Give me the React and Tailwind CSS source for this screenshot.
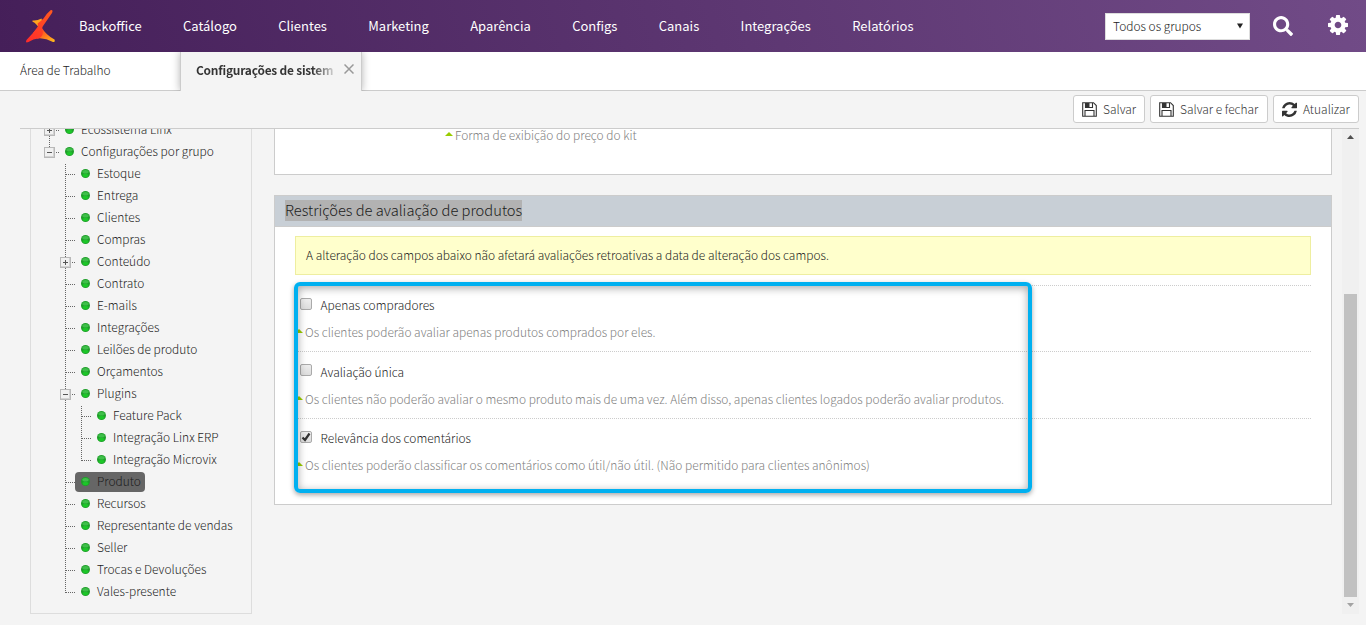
import { FaSearch } from "react-icons/fa";

const menu = ["Backoffice", "Catálogo", "Clientes", "Marketing", "Aparência", "Configs", "Canais", "Integrações", "Relatórios"];

const tree = [
    { label: "Ecossistema Linx", depth: 0, box: "plus" },
    { label: "Configurações por grupo", depth: 0, box: "minus", last: true },
    { label: "Estoque", depth: 1 },
    { label: "Entrega", depth: 1 },
    { label: "Clientes", depth: 1 },
    { label: "Compras", depth: 1 },
    { label: "Conteúdo", depth: 1, box: "plus" },
    { label: "Contrato", depth: 1 },
    { label: "E-mails", depth: 1 },
    { label: "Integrações", depth: 1 },
    { label: "Leilões de produto", depth: 1 },
    { label: "Orçamentos", depth: 1 },
    { label: "Plugins", depth: 1, box: "minus" },
    { label: "Feature Pack", depth: 2 },
    { label: "Integração Linx ERP", depth: 2 },
    { label: "Integração Microvix", depth: 2, last: true },
    { label: "Produto", depth: 1, selected: true },
    { label: "Recursos", depth: 1 },
    { label: "Representante de vendas", depth: 1 },
    { label: "Seller", depth: 1 },
    { label: "Trocas e Devoluções", depth: 1 },
    { label: "Vales-presente", depth: 1, last: true },
];

const options = [
    { label: "Apenas compradores", hint: "Os clientes poderão avaliar apenas produtos comprados por eles." },
    { label: "Avaliação única", hint: "Os clientes não poderão avaliar o mesmo produto mais de uma vez. Além disso, apenas clientes logados poderão avaliar produtos." },
    { label: "Relevância dos comentários", hint: "Os clientes poderão classificar os comentários como útil/não útil. (Não permitido para clientes anônimos)", checked: true },
];

function Logo() {
    return (
        <svg className="w-[30px] h-[34px]" viewBox="0 0 30 34">
            <defs>
                <linearGradient id="logoRed" x1="0" y1="1" x2="1" y2="0">
                    <stop offset="0" stopColor="#ff2a2a" />
                    <stop offset="1" stopColor="#ff5a1f" />
                </linearGradient>
                <linearGradient id="logoGold" x1="0.300" y1="0.200" x2="1" y2="1">
                    <stop offset="0" stopColor="#ff3a24" />
                    <stop offset="0.600" stopColor="#ff8a1e" />
                    <stop offset="1" stopColor="#ffc01c" />
                </linearGradient>
            </defs>
            <path d="M7.500 11.500Q12 12 16.500 9.500L18 15L14 19Q11 14 7.500 12.800Z" fill="#ffa51e" />
            <path d="M14 16Q18 16 17 19Q21 26 29.500 30.500Q30.500 33.500 28 33Q20 28.500 12 29.500L8 24Z" fill="url(#logoGold)" />
            <path d="M25.500 1.200Q28.500 0.500 27 4L18 17Q16.500 19 17.500 21Q19 27 14 29.300Q8 30 3.500 33Q0 34.500 1.500 31L12.500 19Q13.500 17 12.500 14.500Q16 12 18.500 9.500Q22 4 25.500 1.200Z" fill="url(#logoRed)" />
        </svg>
    );
}

function GearIcon() {
    return (
        <svg className="mb-[2px] ml-[35px] size-5" viewBox="0 0 1536 1536" fill="currentColor">
            <path d="M1024 768q0-106-75-181t-181-75-181 75-75 181 75 181 181 75 181-75 75-181zm512-109v222q0 12-8 23t-20 13l-185 28q-19 54-39 91 35 50 107 138 10 12 10 25t-9 23q-27 37-99 108t-94 71q-12 0-26-9l-138-108q-44 23-91 38-16 136-29 186-7 28-36 28H657q-14 0-24.500-8.500T621 1506l-28-184q-49-16-90-37l-141 107q-10 9-25 9-14 0-25-11-126-114-165-168-7-10-7-23 0-12 8-23 15-21 51-66.500t54-70.500q-27-50-41-99L29 913q-13-2-21-12.500T0 877V655q0-12 8-23t19-13l186-28q14-46 39-92-40-57-107-138-10-12-10-24 0-10 9-23 26-36 98.500-107.500T337 135q13 0 26 10l138 107q44-23 91-38 16-136 29-186 7-28 36-28h222q14 0 24.500 8.500T915 30l28 184q49 16 90 37l142-107q9-9 24-9 13 0 25 10 129 119 165 170 7 8 7 22 0 12-8 23-15 21-51 66.500t-54 70.500q26 50 41 98l183 28q13 2 21 12.500t8 23.500z" />
        </svg>
    );
}

function Connector({ box, last, lineOnly }) {
    return (
        <svg className="w-4 h-[22px] shrink-0" viewBox="0 0 16 22" shapeRendering="crispEdges">
            <path d={last ? "M5.5 1V12" : "M5.5 1V22"} stroke="#666" strokeDasharray="1 1" />
            {!lineOnly && <path d="M6 11.5H16" stroke="#666" strokeDasharray="1 1" />}
            {box && <rect x="0.5" y="6.5" width="10" height="10" fill="#f0f0f0" stroke="#b8b8b8" />}
            {box && <path d="M1 15.500H9.500V7" fill="none" stroke="#d2d2d2" />}
            {box && <path d="M3 11.5H8" stroke="#555" />}
            {box === "plus" && <path d="M5.5 9V14" stroke="#555" />}
        </svg>
    );
}

function TreeRow({ item }) {
    return (
        <div className="flex h-[22px] items-center pl-[13px]">
            {item.depth > 0 && <span className="w-4 shrink-0" />}
            {item.depth > 1 && <Connector lineOnly />}
            <Connector box={item.box} last={item.last} />
            <span className={`-ml-px flex h-5 items-center gap-[7px] rounded-[4px] pl-[6px] pr-1 ${item.selected ? "bg-[#666]" : ""}`}>
                <svg className="mb-px size-[9px]" viewBox="0 0 9 9">
                    <circle cx="4.5" cy="4.5" r="4.500" fill="#1f9f2a" />
                    <ellipse cx="4.5" cy="2.700" rx="3.200" ry="1.800" fill="#3fbf4a" />
                    <ellipse cx="4.5" cy="6.500" rx="2.900" ry="1.700" fill="#1cc628" />
                </svg>
                <span className="pb-0.5 whitespace-nowrap">{item.label}</span>
            </span>
        </div>
    );
}

function SaveIcon() {
    return (
        <svg className="size-[15px]" viewBox="0 0 15 15" fill="none" stroke="#333">
            <path d="M0.7 0.7H11.5L14.3 3.5V14.3H0.7Z" strokeWidth="1.1" />
            <path d="M3.5 1V5.5H10.5V1M3 14V8.5H12V14" strokeWidth="1.1" />
            <path d="M4 1H7.500V5H4Z" fill="#333" stroke="none" />
        </svg>
    );
}

function RefreshIcon() {
    return (
        <svg className="size-[15px]" viewBox="0 0 1536 1536" fill="#333">
            <path d="M1511 928q0 5-1 7-64 268-268 434.500T764 1536q-146 0-282.500-55T238 1324l-129 129q-19 19-45 19t-45-19-19-45V960q0-26 19-45t45-19h448q26 0 45 19t19 45-19 45l-137 137q71 66 161 102t187 36q134 0 250-65t186-179q11-17 53-117 8-23 30-23h192q13 0 22.500 9.500t9.500 22.500zm25-800v448q0 26-19 45t-45 19h-448q-26 0-45-19t-19-45 19-45l138-138Q969 256 768 256q-134 0-250 65T332 500q-11 17-53 117-8 23-30 23H50q-13 0-22.500-9.500T18 608v-7q65-268 270-434.500T768 0q146 0 284 55.500T1297 212l130-129q19-19 45-19t45 19 19 45z" />
        </svg>
    );
}

function ToolButton({ icon, label, width }) {
    return (
        <button className={`flex h-7 items-center gap-[6px] rounded-[3px] border border-[#ccc] bg-white pl-2 text-[#333] ${width}`}>
            {icon}
            <span className="whitespace-nowrap">{label}</span>
        </button>
    );
}

function Hint({ children }) {
    return (
        <span className="flex items-start gap-[2px] whitespace-nowrap text-[#808080]">
            <svg className="mt-[6px] h-1 w-2 shrink-0" viewBox="0 0 8 4"><path d="M4 0L8 4H0Z" fill="#99cc00" /></svg>
            <span>{children}</span>
        </span>
    );
}

export default function App() {
    return (
        <div className="flex h-[625px] w-[1366px] flex-col overflow-hidden bg-[#f4f4f4] font-['Noto_Sans_CJK_SC',sans-serif] text-[11.95px] leading-[18px] font-light text-[#1c1c1c]">
            {/* Top menu */}
            <header className="flex h-[52px] shrink-0 items-center bg-[linear-gradient(75deg,#451f59,#714b87)] pl-[25px] pr-[18px] text-white">
                <Logo />
                <nav className="ml-6 flex gap-[41.3px] text-[13px] font-normal">
                    {menu.map((label) => <a key={label}>{label}</a>)}
                </nav>
                <div className="ml-auto flex h-[27px] w-[145px] items-center justify-between border border-[#ddd] bg-white pl-[7px] pr-[6px] text-[#222]">
                    Todos os grupos
                    <svg className="mb-px h-[6px] w-[6px]" viewBox="0 0 7 6"><path d="M0 0H7L3.500 6Z" fill="#222" /></svg>
                </div>
                <FaSearch className="ml-[23px] size-5" />
                <GearIcon />
            </header>

            {/* Tabs */}
            <div className="flex h-[39px] shrink-0 bg-white">
                <div className="w-[180px] border-b border-[#ccc] pt-[9px] pl-5">Área de Trabalho</div>
                <div className="flex h-[39px] w-[182px] border-x border-[#ccc] bg-[#f4f4f4] pt-[9px] pl-[15px] shadow-[0_0_8px_rgba(0,0,0,0.3)] [clip-path:inset(0_-10px)]">
                    <span className="w-[137px] bg-[linear-gradient(90deg,#333_85%,#ccc)] bg-clip-text font-bold tracking-[-0.22px] whitespace-nowrap text-transparent">Configurações de sistem</span>
                    <svg className="mt-[3px] ml-[11px] size-[10px]" viewBox="0 0 10 10"><path d="M0.500 0.500L9.500 9.500M9.500 0.500L0.500 9.500" stroke="#999" strokeWidth="1.500" /></svg>
                </div>
                <div className="flex-1 border-b border-[#ccc]" />
            </div>

            {/* Toolbar */}
            <div className="ml-5 mr-[7px] flex h-[38px] shrink-0 justify-end gap-[5px] border-b border-[#ccc] pt-1">
                <ToolButton icon={<SaveIcon />} label="Salvar" width="w-[72px]" />
                <ToolButton icon={<SaveIcon />} label="Salvar e fechar" width="w-[118px]" />
                <ToolButton icon={<RefreshIcon />} label="Atualizar" width="w-[86px]" />
            </div>

            <div className="flex h-[485px] overflow-hidden pl-[30px]">
                {/* Settings tree */}
                <aside className="h-[485px] w-[222px] shrink-0 overflow-hidden border-x border-b border-[#ddd]">
                    <div className="-mt-[10px]">
                        {tree.map((item, i) => <TreeRow key={i} item={item} />)}
                    </div>
                </aside>

                <main className="ml-[22px] w-[1058px] shrink-0">
                    <div className="flow-root h-[46px] border-x border-b border-[#ccc] bg-white pl-[170px]">
                        <div className="-mt-[3px]"><Hint>Forma de exibição do preço do kit</Hint></div>
                    </div>

                    <section className="mt-5 h-[310px] border border-[#ccc] bg-white">
                        <h2 className="flex h-[31px] items-center border-b border-[#ccc] bg-[#c8cfd6] pl-[10px] text-[14.7px]">
                            <span className="mb-px h-[21px] bg-[#b2b2b2] leading-[20px]">Restrições de avaliação de produtos</span>
                        </h2>
                        <div className="px-5 pt-[9px]">
                            <div className="flex h-[39px] items-center border border-[#eeeea0] bg-[#ffc] pb-0.5 pl-[10px]">
                                A alteração dos campos abaixo não afetará avaliações retroativas a data de alteração dos campos.
                            </div>
                            <div className="relative mt-[10px]">
                                {options.map((option) => (
                                    <div key={option.label} className="h-[66.4px] border-t border-dotted border-[#ccc] pt-[10.3px]">
                                        <div className="flex pl-[5px]">
                                            <span className="mt-[1.7px] flex size-3 items-center justify-center rounded-[2px] border border-[#aaa] bg-[linear-gradient(#eee,#ddd)]">
                                                {option.checked && <svg className="size-[10px]" viewBox="0 0 10 10"><path d="M1.500 5.500L4 8L8.500 1.500" fill="none" stroke="#333" strokeWidth="2.200" /></svg>}
                                            </span>
                                            <span className="ml-[8.6px]">{option.label}</span>
                                        </div>
                                        <div className="mt-[9px]"><Hint>{option.hint}</Hint></div>
                                    </div>
                                ))}
                                {/* Highlight frame over the options */}
                                <div className="absolute -top-[3px] -left-px h-[211px] w-[738px] rounded-[6px] border-4 border-[#00b0f0] shadow-[0_2px_5px_rgba(0,0,0,0.35),inset_0_2px_8px_rgba(0,0,0,0.35)]" />
                            </div>
                        </div>
                    </section>
                </main>

                {/* Scrollbar */}
                <div className="ml-[10px] flex h-[485px] w-[17px] flex-col items-center bg-[#f0f0f0]">
                    <svg className="mt-[6px] h-1 w-[7px]" viewBox="0 0 7 4"><path d="M3.500 0L7 4H0Z" fill="#505050" /></svg>
                    <div className="mt-[155px] h-[303px] w-[13px] bg-[#c1c1c1]" />
                    <svg className="mt-[6px] h-1 w-[7px]" viewBox="0 0 7 4"><path d="M0 0H7L3.500 4Z" fill="#a3a3a3" /></svg>
                </div>
            </div>
        </div>
    );
}
